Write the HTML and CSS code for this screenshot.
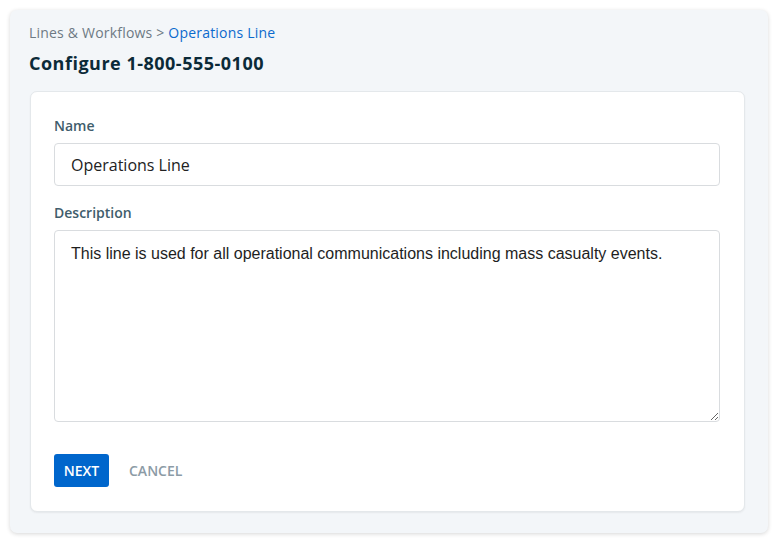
FILE: index.html
```html
<!DOCTYPE html>
<html lang="en">
<head>
<meta charset="utf-8">
<title>Configure 1-800-555-0100</title>
<link rel="stylesheet" href="styles.css">
</head>
<body>
<div class="panel">
  <nav class="crumbs">Lines &amp; Workflows &gt; <a class="crumb-link" href="#">Operations Line</a></nav>
  <h1 class="title">Configure 1-800-555-0100</h1>
  <form class="card">
    <label class="label" for="name">Name</label>
    <input class="input" id="name" type="text" value="Operations Line">
    <label class="label label-desc" for="desc">Description</label>
    <textarea class="textarea" id="desc">This line is used for all operational communications including mass casualty events.</textarea>
    <div class="actions">
      <button type="button" class="btn btn-primary">NEXT</button>
      <button type="button" class="btn btn-link">CANCEL</button>
    </div>
  </form>
</div>
</body>
</html>
```

FILE: styles.css
```css
* { box-sizing: border-box; }
html, body { margin: 0; padding: 0; background: #ffffff; }
body { font-family: "Open Sans", "Noto Sans", sans-serif; }

.panel {
  margin: 10px;
  width: 758px;
  height: 523px;
  background: #f3f6f9;
  border-radius: 7px;
  box-shadow: 0 1px 4px rgba(0, 0, 0, 0.16);
  padding: 13px 23px 20px 19px;
}

.crumbs {
  font-size: 14px;
  line-height: 20px;
  color: #6e7a84;
  letter-spacing: 0.2px;
}
.crumb-link {
  color: #0b6acd;
  text-decoration: none;
}

.title {
  margin: 8px 0 0;
  font-size: 18px;
  line-height: 24px;
  font-weight: 700;
  letter-spacing: 0.5px;
  color: #0b2a38;
}

.card {
  margin-top: 16px;
  margin-left: 1px;
  background: #ffffff;
  border: 1px solid #e4e8eb;
  border-radius: 7px;
  box-shadow: 0 1px 2px rgba(0, 0, 0, 0.06);
  padding: 23px 24px 24px 23px;
  display: flex;
  flex-direction: column;
}

.label {
  font-size: 14px;
  line-height: 22px;
  font-weight: 600;
  color: #3f5d6c;
  margin-bottom: 6px;
}
.label-desc { margin-top: 16px; }

.input {
  height: 43px;
  border: 1px solid #d9dcdf;
  border-radius: 4px;
  padding: 0 16px;
  font-family: "Open Sans", "Noto Sans", sans-serif;
  font-size: 16px;
  color: #222222;
  background: #ffffff;
  outline: none;
}

.textarea {
  height: 192px;
  border: 1px solid #d9dcdf;
  border-radius: 4px;
  padding: 13px 16px;
  font-family: "Liberation Sans", Arial, sans-serif;
  font-size: 16px;
  line-height: 20px;
  color: #1e1e1e;
  background: #ffffff;
  resize: vertical;
  outline: none;
}

.actions {
  margin-top: 32px;
  display: flex;
  gap: 12px;
  align-items: center;
}

.btn {
  font-family: "Open Sans", "Noto Sans", sans-serif;
  font-size: 14px;
  font-weight: 600;
  height: 33px;
  border: none;
  border-radius: 3px;
  padding: 0 9px;
  cursor: pointer;
}
.btn-primary {
  background: #0066cc;
  color: #ffffff;
  width: 55px;
}
.btn-link {
  background: transparent;
  color: #8c9ba6;
  padding: 0 8px;
}
```
